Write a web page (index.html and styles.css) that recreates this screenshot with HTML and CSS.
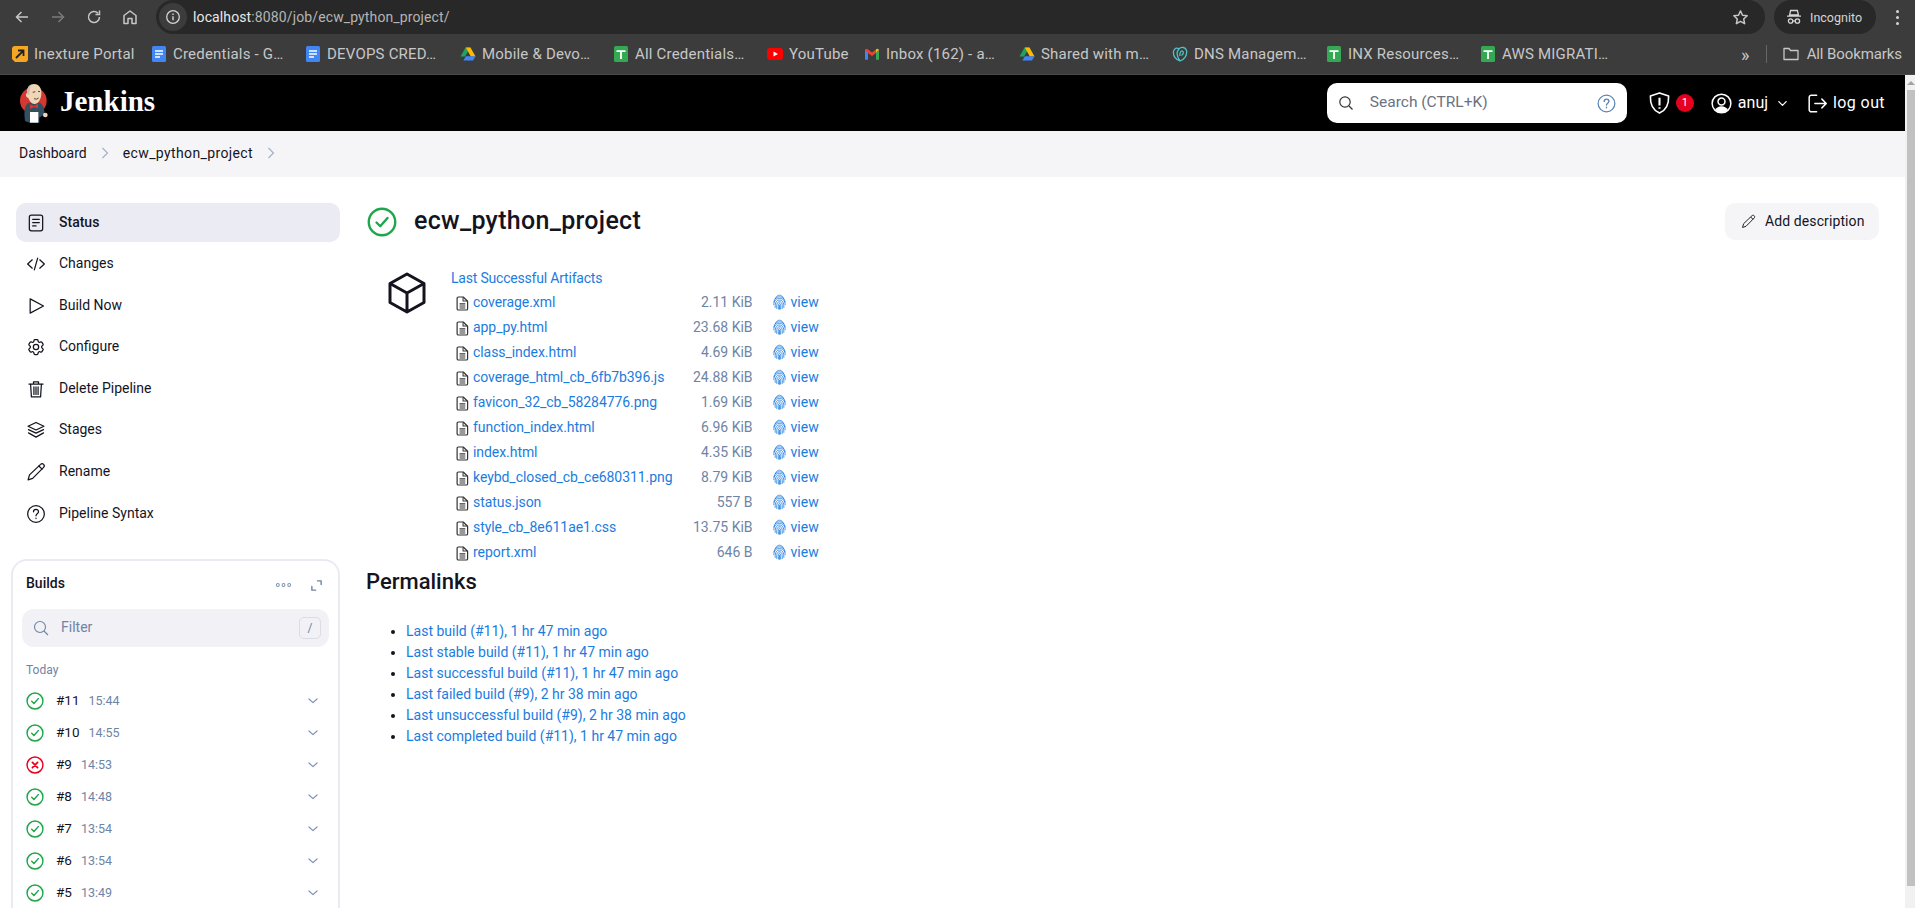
FILE: index.html
```html
<!DOCTYPE html>
<html lang="en">
<head>
<meta charset="utf-8">
<title>ecw_python_project - Jenkins</title>
<link rel="stylesheet" href="styles.css">
</head>
<body>
<svg class="defs" width="0" height="0" aria-hidden="true">
  <symbol id="ok" viewBox="0 0 24 24"><circle cx="12" cy="12" r="10.6" fill="none" stroke="#1ea64b" stroke-width="1.9"/><path d="M7.6 12.4l3 3 5.8-6.6" fill="none" stroke="#1ea64b" stroke-width="1.9" stroke-linecap="round" stroke-linejoin="round"/></symbol>
  <symbol id="bad" viewBox="0 0 24 24"><circle cx="12" cy="12" r="10.6" fill="none" stroke="#e6001f" stroke-width="1.9"/><path d="M8.6 8.6l6.8 6.8M15.4 8.6l-6.8 6.8" fill="none" stroke="#e6001f" stroke-width="2.4" stroke-linecap="round"/></symbol>
  <symbol id="chev" viewBox="0 0 12 12"><path d="M2 4l4 3.6L10 4" fill="none" stroke="#7f92b0" stroke-width="1.2" stroke-linecap="round" stroke-linejoin="round"/></symbol>
  <symbol id="file" viewBox="0 0 14 16"><path d="M2.6 1h5.2L12.5 5.6v8a1.4 1.4 0 0 1-1.4 1.4H2.6a1.4 1.4 0 0 1-1.4-1.4V2.4A1.4 1.4 0 0 1 2.6 1z" fill="none" stroke="#333" stroke-width="1.3" stroke-linejoin="round"/><path d="M7.6 1.2v4.2h4.6M3.8 8.4h6.2M3.8 10.6h6.2M3.8 12.8h6.2" fill="none" stroke="#333" stroke-width="1.1"/></symbol>
  <symbol id="finger" viewBox="0 0 24 28"><g fill="none" stroke="#1b7ce0" stroke-width="1.5" stroke-linecap="round"><path d="M4 8C6 3.5 9 1.500 12 1.500s6 2 8 6.500"/><path d="M1.500 14C2.500 8 6.500 4.500 12 4.500S21.500 8 22.500 14"/><path d="M1.500 19C1.500 11 6 7.500 12 7.500s10.500 3.500 10.500 11.500"/><path d="M4 24C3.500 14 7 10.500 12 10.500S20.500 14 20 24"/><path d="M7 26C6 17 8.500 13.500 12 13.500s6 3.500 5 12.500"/><path d="M10 27C9.500 20 10 16.500 12 16.500s2.500 3.500 2 10.500"/><path d="M12 20v7.500"/></g></symbol>
  <symbol id="sheet" viewBox="0 0 16 16"><rect x="1" y="0" width="14" height="16" rx="1.500" fill="#34a853"/><path d="M3.500 5.200h9M8 5.200V13" stroke="#fff" stroke-width="1.800" fill="none"/></symbol>
  <symbol id="doc" viewBox="0 0 16 16"><rect x="1" y="0" width="14" height="16" rx="1.500" fill="#4285f4"/><path d="M4 5h8M4 8h8M4 11h5" stroke="#fff" stroke-width="1.400" fill="none"/></symbol>
  <symbol id="drive" viewBox="0 0 16 16"><path d="M5.500 1.500h5L5 10.500H.5z" fill="#1ea362"/><path d="M10.500 1.500l5 9H10.800L5.800 1.500z" fill="#ffba00"/><path d="M3.400 14.500l2.500-4.200h9.600l-2.500 4.200z" fill="#4285f4"/></symbol>
</svg>

<div class="browser">
  <div class="toolbar">
    <svg class="nav-ico back" viewBox="0 0 16 16"><path d="M14 8H3M7.500 3L2.500 8l5 5" fill="none" stroke="#c7c7c7" stroke-width="1.500"/></svg>
    <svg class="nav-ico fwd" viewBox="0 0 16 16"><path d="M2 8h11M8.500 3l5 5-5 5" fill="none" stroke="#7b7b7b" stroke-width="1.500"/></svg>
    <svg class="nav-ico" viewBox="0 0 16 16"><path d="M13.500 8A5.500 5.500 0 1 1 12 4.200M13.500 1.500v4h-4" fill="none" stroke="#c7c7c7" stroke-width="1.500"/></svg>
    <svg class="nav-ico home" viewBox="0 0 16 16"><path d="M2 14.500V6.500L8 2l6 4.500v8h-4v-5H6v5z" fill="none" stroke="#c7c7c7" stroke-width="1.500" stroke-linejoin="round"/></svg>
    <div class="omnibox">
      <span class="info"><svg viewBox="0 0 16 16"><circle cx="8" cy="8" r="6.300" fill="none" stroke="#d5d5d5" stroke-width="1.300"/><path d="M8 7.200v4M8 4.600v1.300" stroke="#d5d5d5" stroke-width="1.400"/></svg></span>
      <span class="url"><span class="host">localhost</span>:8080/job/ecw_python_project/</span>
      <svg class="star" viewBox="0 0 16 16"><path d="M8 1.800l1.900 4.100 4.400.5-3.300 3 .9 4.400L8 11.600l-3.900 2.200.9-4.400-3.300-3 4.400-.5z" fill="none" stroke="#c7c7c7" stroke-width="1.400" stroke-linejoin="round"/></svg>
    </div>
    <div class="incognito">
      <svg viewBox="0 0 16 16"><path d="M4.600 1.500h6.800l1 4.500H3.600zM1 7.200h14" fill="none" stroke="#d5d5d5" stroke-width="1.300"/><circle cx="4.600" cy="12" r="2.200" fill="none" stroke="#d5d5d5" stroke-width="1.300"/><circle cx="11.400" cy="12" r="2.200" fill="none" stroke="#d5d5d5" stroke-width="1.300"/><path d="M6.800 12h2.400" stroke="#d5d5d5" stroke-width="1.300"/></svg>
      <span>Incognito</span>
    </div>
    <div class="dots"><i></i><i></i><i></i></div>
  </div>
  <div class="bookmarks">
    <div class="bm-list">
      <span class="bm"><svg viewBox="0 0 16 16"><path d="M3 0h13v13a3 3 0 0 1-3 3H3l-3-3V3a3 3 0 0 1 3-3z" fill="#f5a623"/><path d="M4 12l7-7M6 4.500h5.500V10" stroke="#222" stroke-width="1.800" fill="none"/></svg>Inexture Portal</span>
      <span class="bm"><svg><use href="#doc"/></svg>Credentials - G…</span>
      <span class="bm"><svg><use href="#doc"/></svg>DEVOPS CRED…</span>
      <span class="bm"><svg><use href="#drive"/></svg>Mobile &amp; Devo…</span>
      <span class="bm"><svg><use href="#sheet"/></svg>All Credentials…</span>
      <span class="bm"><svg viewBox="0 0 16 16"><rect y="2" width="16" height="12" rx="3" fill="#f00"/><path d="M6.500 5.500v5L11 8z" fill="#fff"/></svg>YouTube</span>
      <span class="bm"><svg viewBox="0 0 16 16"><path d="M1 3.500v10h3V7l4 3 4-3v6.500h3v-10l-2-.8L8 6.500 3 2.700z" fill="#ea4335"/><path d="M1 4v9.500h3V6.500z" fill="#4285f4"/><path d="M15 4v9.500h-3V6.500z" fill="#34a853"/><path d="M12 6.500l3-2.700-2-1.100-1 .8z" fill="#fbbc04"/></svg>Inbox (162) - a…</span>
      <span class="bm"><svg><use href="#drive"/></svg>Shared with m…</span>
      <span class="bm"><svg viewBox="0 0 16 16"><path d="M8 15C3 13 1 9.500 1.500 5.500 2 2.500 5 1 7 3c2-2.500 6.500-2 7.500 1.500C15.500 9 12.500 13.500 8 15zM7 3C4.500 5.500 4.500 10 8 15M9.500 9.500c2-1.500 2.500-4 .8-4.500-1.500-.4-2.800 2-2.300 5" fill="none" stroke="#4fc3c7" stroke-width="1.300"/></svg>DNS Managem…</span>
      <span class="bm"><svg><use href="#sheet"/></svg>INX Resources…</span>
      <span class="bm"><svg><use href="#sheet"/></svg>AWS MIGRATI…</span>
    </div>
    <span class="more">»</span>
    <span class="sep"></span>
    <span class="bm all"><svg viewBox="0 0 16 16"><path d="M1 13.500V2.500h5l1.500 2H15v9z" fill="none" stroke="#c7c7c7" stroke-width="1.300" stroke-linejoin="round"/></svg>All Bookmarks</span>
  </div>
</div>

<div class="viewport">
  <div class="page">
    <header class="jheader">
      <a class="brand">
        <svg class="logo" viewBox="27 21 90 120">
          <circle cx="70" cy="74" r="40" fill="#d33833"/>
          <path d="M45 135C42 110 42 90 55 80L90 80C100 88 105 100 103 115L88 125L88 140L58 140Z" fill="#335061"/>
          <path d="M52 50C50 32 60 24 72 24C88 24 95 38 94 52C94 66 88 82 75 84C65 85 58 74 55 66C50 66 47 60 48 55C49 51 51 51 52 50Z" fill="#f0d6b7"/>
          <path d="M52 54C50 38 56 30 63 27C59 38 59 46 57 58Z" fill="#cbbfb0"/>
          <path d="M68 49l8-2M84 46l6 1M72 68q8 4 14-2" fill="none" stroke="#3a2a20" stroke-width="2.500"/>
          <path d="M60 85L72 90L84 83L84 97L72 93L60 99Z" fill="#d33833"/>
          <path d="M60 108h25v32H60z" fill="#fff"/>
          <circle cx="106" cy="117" r="7" fill="#f0d6b7"/>
        </svg>
        <span class="brand-name">Jenkins</span>
      </a>
      <div class="search">
        <svg class="search-ico" viewBox="0 0 16 16"><circle cx="7" cy="7" r="5.200" fill="none" stroke="#333" stroke-width="1.200"/><path d="M11 11l3.500 3.500" stroke="#333" stroke-width="1.200"/></svg>
        <span class="search-text">Search (CTRL+K)</span>
        <svg class="help" viewBox="0 0 20 20"><circle cx="10" cy="10" r="8.800" fill="none" stroke="#5b84b8" stroke-width="1.300"/><path d="M7.600 7.800c0-3.200 4.900-3.200 4.900-.1 0 2-2.500 2-2.500 4M10 14v.6" fill="none" stroke="#5b84b8" stroke-width="1.500" stroke-linecap="round"/></svg>
      </div>
      <div class="hactions">
        <svg class="shield" viewBox="0 0 24 24"><path d="M12 1.500l9.500 3.300c.3 7.500-2 14.500-9.500 17.700C4.500 19.300 2.200 12.300 2.500 4.800z" fill="none" stroke="#fff" stroke-width="1.700" stroke-linejoin="round"/><path d="M12 6.500v8M12 16.500v1.500" stroke="#fff" stroke-width="2.200"/></svg>
        <span class="badge">1</span>
        <svg class="user" viewBox="0 0 24 24"><circle cx="12" cy="12" r="10.700" fill="none" stroke="#fff" stroke-width="1.700"/><circle cx="12" cy="9.800" r="4" fill="none" stroke="#fff" stroke-width="1.700"/><path d="M4.800 19.500c1.500-3.300 4-4.500 7.200-4.500s5.700 1.200 7.200 4.500C17 21.800 14.500 22.500 12 22.500s-5-.7-7.200-3z" fill="#fff"/></svg>
        <span class="uname">anuj</span>
        <svg class="uchev" viewBox="0 0 12 12"><path d="M2 4l4 4 4-4" fill="none" stroke="#fff" stroke-width="1.400" stroke-linecap="round" stroke-linejoin="round"/></svg>
        <svg class="logout" viewBox="0 0 24 24"><path d="M11 2.500H5A2.500 2.500 0 0 0 2.500 5v14A2.500 2.500 0 0 0 5 21.500h6M9 12h12.500M17 7l5 5-5 5" fill="none" stroke="#fff" stroke-width="1.700" stroke-linecap="round" stroke-linejoin="round"/></svg>
        <span class="ltext">log out</span>
      </div>
    </header>

    <nav class="crumbs">
      <span>Dashboard</span>
      <svg class="cchev" viewBox="0 0 10 14"><path d="M2.500 2l5 5-5 5" fill="none" stroke="#9fb0c8" stroke-width="1.100"/></svg>
      <span class="crumb-job">ecw_python_project</span>
      <svg class="cchev" viewBox="0 0 10 14"><path d="M2.500 2l5 5-5 5" fill="none" stroke="#9fb0c8" stroke-width="1.100"/></svg>
    </nav>

    <div class="layout">
      <aside class="side">
        <ul class="tasks">
          <li class="task current"><svg viewBox="0 0 24 24"><rect x="4" y="2.500" width="16" height="19" rx="2.500"/><path d="M8 7.500h8M8 11.500h8M8 15.500h4"/></svg>Status</li>
          <li class="task"><svg viewBox="0 0 24 24"><path d="M7.500 7L2 12l5.500 5M16.500 7L22 12l-5.500 5M14 5l-4 14"/></svg>Changes</li>
          <li class="task"><svg viewBox="0 0 24 24"><path d="M5 3.500v17l16-8.500z"/></svg>Build Now</li>
          <li class="task"><svg viewBox="0 0 24 24"><path d="M9.594 3.940c.09-.542.56-.94 1.110-.94h2.593c.55 0 1.020.398 1.110.94l.213 1.281c.063.374.313.686.645.87.074.04.147.083.22.127.325.196.72.257 1.075.124l1.217-.456a1.125 1.125 0 0 1 1.370.49l1.296 2.247a1.125 1.125 0 0 1-.26 1.431l-1.003.827c-.293.241-.438.613-.43.992a7.723 7.723 0 0 1 0 .255c-.008.378.137.75.43.991l1.004.827c.424.35.534.955.26 1.430l-1.298 2.247a1.125 1.125 0 0 1-1.369.491l-1.217-.456c-.355-.133-.75-.072-1.076.124a6.470 6.470 0 0 1-.22.128c-.331.183-.581.495-.644.869l-.213 1.281c-.09.543-.56.94-1.110.94h-2.594c-.55 0-1.019-.398-1.110-.94l-.213-1.281c-.062-.374-.312-.686-.644-.87a6.520 6.520 0 0 1-.22-.127c-.325-.196-.72-.257-1.076-.124l-1.217.456a1.125 1.125 0 0 1-1.369-.49l-1.297-2.247a1.125 1.125 0 0 1 .26-1.431l1.004-.827c.292-.24.437-.613.43-.991a6.932 6.932 0 0 1 0-.255c.007-.38-.138-.751-.43-.992l-1.004-.827a1.125 1.125 0 0 1-.26-1.430l1.297-2.247a1.125 1.125 0 0 1 1.370-.491l1.216.456c.356.133.751.072 1.076-.124.072-.044.146-.086.22-.128.332-.183.582-.495.644-.869l.214-1.280z"/><circle cx="12" cy="12" r="3.200"/></svg>Configure</li>
          <li class="task"><svg viewBox="0 0 24 24"><path d="M3.500 6h17M9 6V3.500h6V6M5.500 6l1 15.500h11l1-15.500M9.500 9.500v9M12 9.500v9M14.500 9.500v9"/></svg>Delete Pipeline</li>
          <li class="task"><svg viewBox="0 0 24 24"><path d="M12 3l9.500 4.500L12 12 2.500 7.500zM3 11.500l9 4.300 9-4.300M3 15.500l9 5 9-5"/></svg>Stages</li>
          <li class="task"><svg viewBox="0 0 24 24"><path d="M2.500 21.500l1.700-6L17.500 2.800c1-1 2.600-1 3.600 0 1 1 1 2.600 0 3.600L8 19.700z"/><path d="M15.500 4.800l3.700 3.700"/></svg>Rename</li>
          <li class="task"><svg viewBox="0 0 24 24"><circle cx="12" cy="12" r="10"/><path d="M9 9.300c0-3.800 6-3.800 6-.1 0 2.500-3 2.500-3 5M12 17v.5"/></svg>Pipeline Syntax</li>
        </ul>

        <section class="builds">
          <div class="b-head">
            <span class="b-title">Builds</span>
            <svg class="b-more" viewBox="0 0 18 6"><g fill="none" stroke="#7f92b0" stroke-width="1.100"><circle cx="3" cy="3" r="1.500"/><circle cx="9" cy="3" r="1.500"/><circle cx="15" cy="3" r="1.500"/></g></svg>
            <svg class="b-exp" viewBox="0 0 14 14"><path d="M8 2h4v4M6 12H2V8" fill="none" stroke="#6f84a5" stroke-width="1.500" stroke-linecap="round" stroke-linejoin="round"/></svg>
          </div>
          <div class="filter">
            <svg class="f-ico" viewBox="0 0 16 16"><circle cx="7" cy="7" r="5.500" fill="none" stroke="#6f84a5" stroke-width="1.100"/><path d="M11 11l4 4" stroke="#6f84a5" stroke-width="1.100"/></svg>
            <span class="f-text">Filter</span>
            <span class="f-key">/</span>
          </div>
          <div class="today">Today</div>
          <ul class="runs">
            <li class="run"><svg class="r-ico"><use href="#ok"/></svg><span class="r-num">#11</span><span class="r-time">15:44</span><svg class="r-chev"><use href="#chev"/></svg></li>
            <li class="run"><svg class="r-ico"><use href="#ok"/></svg><span class="r-num">#10</span><span class="r-time">14:55</span><svg class="r-chev"><use href="#chev"/></svg></li>
            <li class="run"><svg class="r-ico"><use href="#bad"/></svg><span class="r-num">#9</span><span class="r-time">14:53</span><svg class="r-chev"><use href="#chev"/></svg></li>
            <li class="run"><svg class="r-ico"><use href="#ok"/></svg><span class="r-num">#8</span><span class="r-time">14:48</span><svg class="r-chev"><use href="#chev"/></svg></li>
            <li class="run"><svg class="r-ico"><use href="#ok"/></svg><span class="r-num">#7</span><span class="r-time">13:54</span><svg class="r-chev"><use href="#chev"/></svg></li>
            <li class="run"><svg class="r-ico"><use href="#ok"/></svg><span class="r-num">#6</span><span class="r-time">13:54</span><svg class="r-chev"><use href="#chev"/></svg></li>
            <li class="run"><svg class="r-ico"><use href="#ok"/></svg><span class="r-num">#5</span><span class="r-time">13:49</span><svg class="r-chev"><use href="#chev"/></svg></li>
          </ul>
        </section>
      </aside>

      <main class="main">
        <div class="title-row">
          <svg class="t-ico"><use href="#ok"/></svg>
          <h1 class="title">ecw_python_project</h1>
          <button class="add"><svg viewBox="0 0 24 24"><path d="M2.500 21.500l1.700-6L17.500 2.800c1-1 2.600-1 3.600 0 1 1 1 2.600 0 3.600L8 19.700zM15.500 4.800l3.700 3.700" fill="none" stroke="#222" stroke-width="1.600" stroke-linejoin="round"/></svg><span class="add-text">Add description</span></button>
        </div>

        <div class="artifacts">
          <svg class="cube" viewBox="0 0 40 42"><path d="M20 2l17 9.500v19L20 40 3 30.500v-19zM3 11.500L20 21l17-9.500M20 21v19" fill="none" stroke="#14141f" stroke-width="3" stroke-linejoin="round"/></svg>
          <div class="a-body">
            <a class="a-head">Last Successful Artifacts</a>
            <table class="a-table">
              <tr><td class="c-i"><svg><use href="#file"/></svg></td><td class="c-n">coverage.xml</td><td class="c-s">2.11 KiB</td><td class="c-v"><svg><use href="#finger"/></svg>view</td></tr>
              <tr><td class="c-i"><svg><use href="#file"/></svg></td><td class="c-n">app_py.html</td><td class="c-s">23.68 KiB</td><td class="c-v"><svg><use href="#finger"/></svg>view</td></tr>
              <tr><td class="c-i"><svg><use href="#file"/></svg></td><td class="c-n">class_index.html</td><td class="c-s">4.69 KiB</td><td class="c-v"><svg><use href="#finger"/></svg>view</td></tr>
              <tr><td class="c-i"><svg><use href="#file"/></svg></td><td class="c-n">coverage_html_cb_6fb7b396.js</td><td class="c-s">24.88 KiB</td><td class="c-v"><svg><use href="#finger"/></svg>view</td></tr>
              <tr><td class="c-i"><svg><use href="#file"/></svg></td><td class="c-n">favicon_32_cb_58284776.png</td><td class="c-s">1.69 KiB</td><td class="c-v"><svg><use href="#finger"/></svg>view</td></tr>
              <tr><td class="c-i"><svg><use href="#file"/></svg></td><td class="c-n">function_index.html</td><td class="c-s">6.96 KiB</td><td class="c-v"><svg><use href="#finger"/></svg>view</td></tr>
              <tr><td class="c-i"><svg><use href="#file"/></svg></td><td class="c-n">index.html</td><td class="c-s">4.35 KiB</td><td class="c-v"><svg><use href="#finger"/></svg>view</td></tr>
              <tr><td class="c-i"><svg><use href="#file"/></svg></td><td class="c-n">keybd_closed_cb_ce680311.png</td><td class="c-s">8.79 KiB</td><td class="c-v"><svg><use href="#finger"/></svg>view</td></tr>
              <tr><td class="c-i"><svg><use href="#file"/></svg></td><td class="c-n">status.json</td><td class="c-s">557 B</td><td class="c-v"><svg><use href="#finger"/></svg>view</td></tr>
              <tr><td class="c-i"><svg><use href="#file"/></svg></td><td class="c-n">style_cb_8e611ae1.css</td><td class="c-s">13.75 KiB</td><td class="c-v"><svg><use href="#finger"/></svg>view</td></tr>
              <tr><td class="c-i"><svg><use href="#file"/></svg></td><td class="c-n">report.xml</td><td class="c-s">646 B</td><td class="c-v"><svg><use href="#finger"/></svg>view</td></tr>
            </table>
          </div>
        </div>

        <h2 class="perma">Permalinks</h2>
        <ul class="plist">
          <li>Last build (#11), 1 hr 47 min ago</li>
          <li>Last stable build (#11), 1 hr 47 min ago</li>
          <li>Last successful build (#11), 1 hr 47 min ago</li>
          <li>Last failed build (#9), 2 hr 38 min ago</li>
          <li>Last unsuccessful build (#9), 2 hr 38 min ago</li>
          <li>Last completed build (#11), 1 hr 47 min ago</li>
        </ul>
      </main>
    </div>
  </div>
  <div class="scrollbar"><span class="sb-up"></span><span class="sb-thumb"></span></div>
</div>
</body>
</html>
```

FILE: styles.css
```css
* { box-sizing: border-box; }
html, body { margin: 0; height: 100%; overflow: hidden; }
body {
  display: flex;
  flex-direction: column;
  font-family: Roboto, "Noto Sans", sans-serif;
  font-size: 14px;
  color: #14141f;
  background: #fff;
}
.defs { position: absolute; }
ul { list-style: none; margin: 0; padding: 0; }

/* Browser chrome */
.browser { flex: none; background: #3c3c3c; border-bottom: 1px solid #4a4a4a; }
.toolbar { display: flex; align-items: center; height: 34px; padding-left: 14px; }
.nav-ico { width: 16px; height: 16px; margin-right: 20px; flex: none; }
.nav-ico.home { margin-right: 18px; }
.omnibox { display: flex; align-items: center; width: 1609px; height: 34px; background: #282828; border-radius: 17px; padding: 0 16px 0 3px; }
.info { width: 28px; height: 28px; border-radius: 50%; background: #3c3c3c; display: flex; align-items: center; justify-content: center; margin-right: 6px; }
.info svg { width: 16px; height: 16px; }
.url { flex: 1; color: #b5b5b5; font-size: 14px; letter-spacing: .12px; }
.host { color: #e8e8e8; }
.star { width: 17px; height: 17px; }
.incognito { display: flex; align-items: center; gap: 8px; margin-left: 9px; width: 102px; height: 34px; padding-left: 12px; background: #282828; border-radius: 17px; color: #d5d5d5; font-size: 12.500px; }
.incognito svg { width: 16px; height: 16px; }
.dots { display: flex; flex-direction: column; gap: 3px; margin-left: 20px; }
.dots i { width: 3px; height: 3px; border-radius: 50%; background: #d5d5d5; }

.bookmarks { display: flex; align-items: center; height: 40px; padding-left: 12px; color: #c7c7c7; font-size: 15px; letter-spacing: .2px; }
.bm-list { display: grid; grid-template-columns: 139px 154px 155px 153px 154px 97px 155px 153px 154px 154px 261px; }
.bm { display: flex; align-items: center; gap: 6px; white-space: nowrap; }
.bm svg { width: 16px; height: 16px; flex: none; }
.more { font-size: 18px; margin-right: 16px; }
.sep { width: 1px; height: 18px; background: #666; margin-right: 16px; }
.all { gap: 8px; letter-spacing: -.1px; }

/* Viewport below the chrome */
.viewport { flex: 1; min-height: 0; display: flex; }
.page { flex: 1; min-width: 0; overflow: hidden; }
.scrollbar { flex: none; width: 10px; background: #f1f1f1; display: flex; flex-direction: column; align-items: center; }
.sb-up { margin: 6px 0 0 2px; width: 0; height: 0; border: 4px solid transparent; border-top: 0; border-bottom: 4px solid #a3a3a3; }
.sb-thumb { flex: none; height: 796px; align-self: stretch; margin: 5px 0 0 2px; background: #c1c1c1; }

/* Jenkins header */
.jheader { display: flex; align-items: center; height: 56px; background: #000; color: #fff; padding: 0 20px 0 19px; }
.brand { display: flex; align-items: center; gap: 11px; flex: 1; }
.logo { width: 30px; height: 40px; }
.brand-name { font-family: "Liberation Serif", serif; font-weight: 700; font-size: 29px; padding-bottom: 3px; }
.search { display: flex; align-items: center; width: 300px; height: 40px; background: #fff; border-radius: 10px; padding: 0 11px 0 11px; color: #6b7280; font-size: 15.500px; }
.search-ico { width: 16px; height: 16px; margin-right: 16px; }
.search-text { flex: 1; padding-bottom: 2px; }
.help { width: 19px; height: 19px; }
.hactions { display: flex; align-items: center; margin-left: 21px; font-size: 16px; }
.shield { width: 23px; height: 24px; }
.badge { width: 18px; height: 18px; margin-left: 5px; border-radius: 50%; background: #e6001f; font-size: 11px; text-align: center; line-height: 18px; }
.user { width: 21px; height: 21px; margin-left: 17px; }
.uname { margin-left: 6px; padding-bottom: 2px; }
.uchev { width: 11px; height: 11px; margin-left: 9px; }
.logout { width: 21px; height: 21px; margin-left: 19px; }
.ltext { margin-left: 5px; padding-bottom: 2px; letter-spacing: .4px; }

/* Breadcrumb */
.crumbs { display: flex; align-items: center; gap: 13px; height: 46px; padding: 0 0 2px 19px; background: #f5f5f8; }
.crumb-job { letter-spacing: .38px; }
.cchev { width: 10px; height: 14px; }

/* Layout */
.layout { display: flex; }
.side { flex: none; width: 366px; padding: 26px 26px 0 11px; }
.tasks { display: flex; flex-direction: column; gap: 2.6px; margin-left: 5px; }
.task { display: flex; align-items: center; gap: 13px; height: 39px; padding: 0 0 2px 10px; border-radius: 10px; }
.task.current { background: #ebebf3; font-weight: 500; }
.task svg { width: 20px; height: 20px; margin-top: 2px; fill: none; stroke: #14141f; stroke-width: 1.500; stroke-linecap: round; stroke-linejoin: round; flex: none; }

.builds { margin-top: 26px; border: 2px solid #eaeaf2; border-bottom: 0; border-radius: 16px 16px 0 0; padding: 0 9px; height: 400px; }
.b-head { display: flex; align-items: center; height: 48px; padding: 0 6px 0 4px; }
.b-title { flex: 1; font-weight: 500; font-size: 14px; padding-bottom: 5px; }
.b-more { width: 17px; height: 6px; margin-right: 18px; }
.b-exp { width: 13px; height: 13px; }
.filter { display: flex; align-items: center; height: 38px; background: #f1f1f6; border-radius: 12px; padding: 0 8px 0 11px; color: #6f84a5; }
.f-ico { width: 16px; height: 16px; margin-right: 12px; }
.f-text { flex: 1; padding-bottom: 2px; }
.f-key { width: 22px; height: 22px; border: 1px solid #dcdce6; border-radius: 5px; text-align: center; font-size: 12px; line-height: 20px; }
.today { margin: 15px 0 0 4px; font-size: 12px; color: #6f84a5; height: 16px; line-height: 16px; }
.runs { margin-top: 7px; }
.run { display: flex; align-items: center; height: 32px; padding: 0 4px; }
.r-ico { width: 18px; height: 18px; margin-right: 12px; flex: none; }
.r-num { margin-right: 9px; font-size: 13.500px; padding-bottom: 2px; }
.r-time { flex: 1; color: #6f84a5; font-size: 12.500px; padding-bottom: 2px; }
.r-chev { width: 12px; height: 12px; margin-right: 6px; }

/* Main */
.main { flex: 1; padding: 26px 26px 0 0; min-width: 0; }
.title-row { display: flex; align-items: center; height: 37px; }
.t-ico { width: 30px; height: 30px; margin: 0 17px 0 1px; }
.title { flex: 1; margin: 0; padding-bottom: 2px; font-size: 25px; font-weight: 500; letter-spacing: .3px; }
.add { display: flex; align-items: center; gap: 9px; height: 37px; width: 154px; padding: 0 0 0 16px; border: 0; border-radius: 10px; background: #f5f5f8; font: inherit; color: #14141f; }
.add svg { width: 15px; height: 15px; }
.add-text { letter-spacing: .1px; padding-bottom: 2px; }

.artifacts { display: flex; margin-top: 25px; padding-left: 21px; }
.cube { width: 40px; height: 42px; margin: 7px 24px 0 0; }
.a-body { flex: 1; }
.a-head { display: block; height: 25px; line-height: 27px; color: #1b7ce0; letter-spacing: -.2px; }
.a-table { border-collapse: collapse; }
.a-table td { padding: 0 0 2px; height: 25px; white-space: nowrap; }
.a-table .c-i { width: 22px; padding: 0 0 0 5px; }
.c-i svg { display: block; width: 13px; height: 15px; margin-top: 2px; }
.c-n { width: 220px; color: #1b7ce0; letter-spacing: -.06px; }
.c-s { width: 55px; text-align: right; color: #6f84a5; }
.a-table .c-v { padding-left: 20px; color: #1b7ce0; }
.c-v svg { width: 13px; height: 16px; vertical-align: -3px; margin-right: 5px; }

.perma { margin: 2px 0 0; height: 30px; line-height: 30px; font-size: 22px; font-weight: 500; }
.plist { list-style: disc; margin-top: 24px; padding-left: 40px; color: #1b7ce0; }
.plist li { height: 21px; line-height: 21px; }
.plist li::marker { color: #14141f; }
```
